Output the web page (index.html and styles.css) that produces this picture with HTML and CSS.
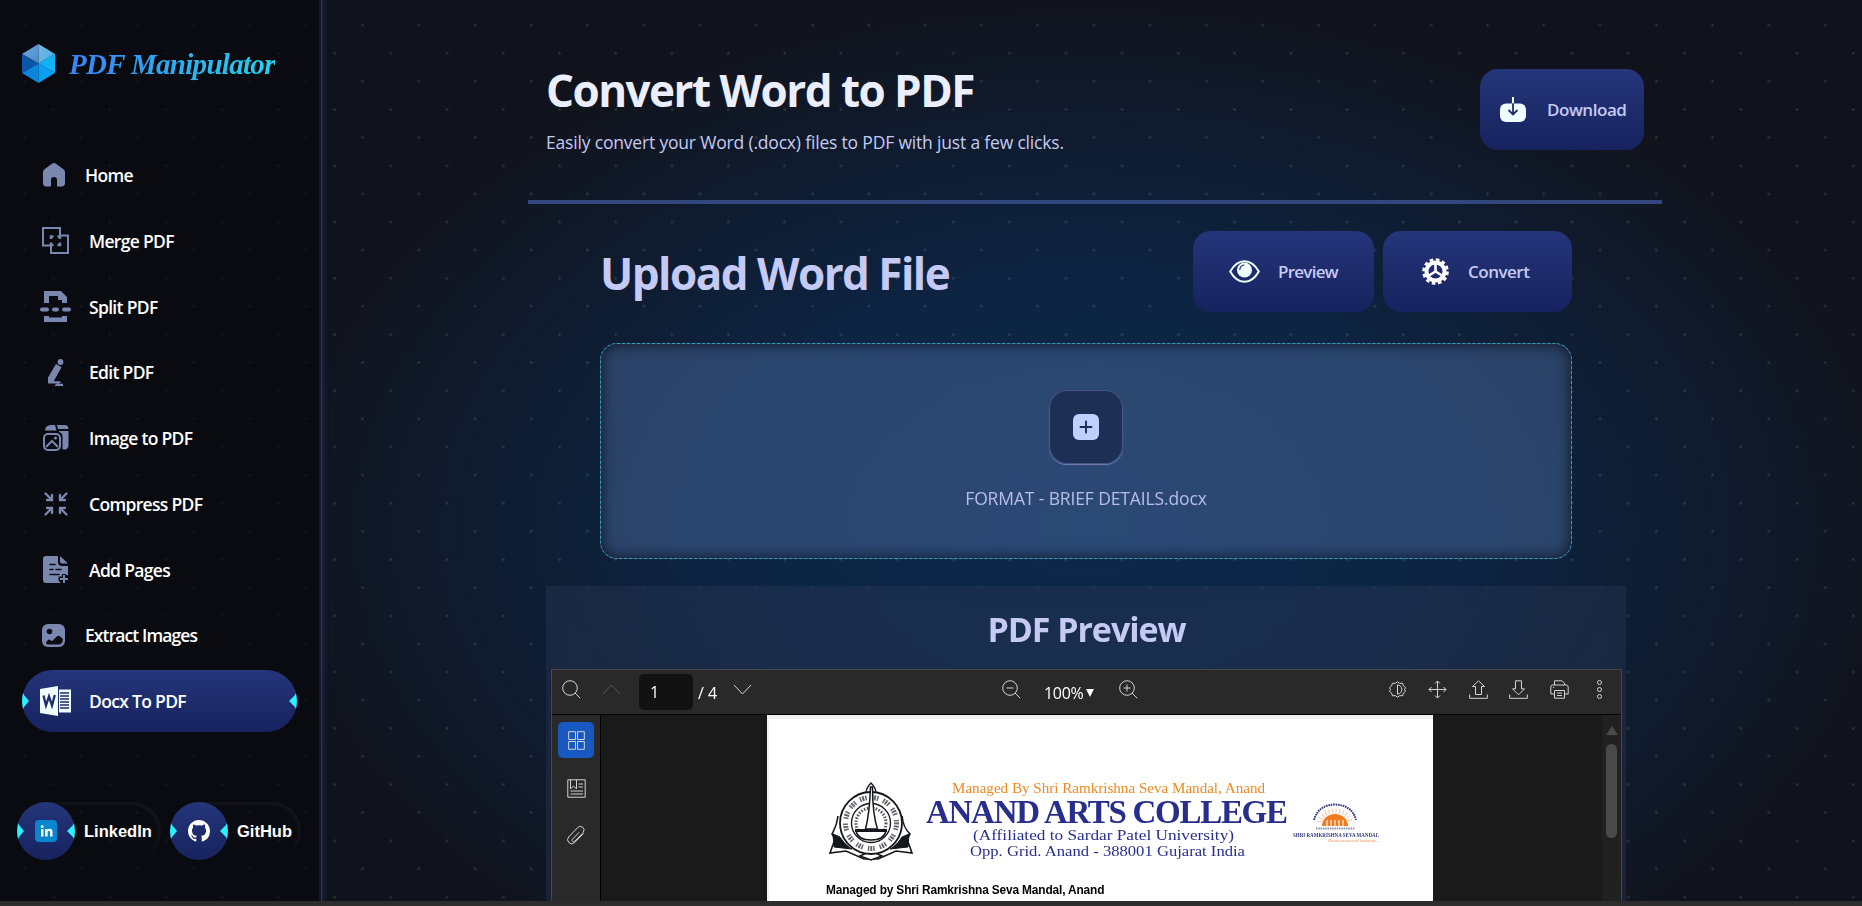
FILE: index.html
```html
<!DOCTYPE html>
<html lang="en">
<head>
<meta charset="utf-8">
<title>PDF Manipulator</title>
<link rel="stylesheet" href="styles.css">
</head>
<body>
<div class="app">
  <aside class="sidebar">
    <div class="brand">
      <svg class="brand-mark" viewBox="0 0 33 39">
        <defs>
          <linearGradient id="h1" x1="0" y1="0" x2="1" y2="1"><stop offset="0" stop-color="#6fa6dd"/><stop offset="1" stop-color="#4b8dd0"/></linearGradient>
          <linearGradient id="h2" x1="0" y1="0" x2="1" y2="1"><stop offset="0" stop-color="#7db4dc"/><stop offset="1" stop-color="#3fb4ee"/></linearGradient>
        </defs>
        <path d="M16.5 0 0 10 16.5 19.5z" fill="url(#h1)"/><path d="M16.5 0 33 10 16.5 19.5z" fill="url(#h2)"/>
        <path d="M0 10v19l16.5-9.500z" fill="#0b56a8"/><path d="M33 10v19l-16.500-9.500z" fill="#12b2f7"/>
        <path d="M0 29 16.500 39V19.500z" fill="#0a86dc"/><path d="M33 29 16.500 39V19.500z" fill="#08a0f2"/>
      </svg>
      <span class="brand-name">PDF Manipulator</span>
    </div>
    <nav class="nav">
      <a class="nav-item narrow"><span class="ico"><svg width="22" height="24" viewBox="0 0 22 24"><path fill="#7a88b0" d="M9 .7a3.500 3.500 0 0 1 4 0l7.500 5.600A3.500 3.500 0 0 1 22 9v11a3.400 3.400 0 0 1-3.400 3.400H14V17a3 3 0 0 0-6 0v6.400H3.400A3.400 3.400 0 0 1 0 20V9a3.500 3.500 0 0 1 1.500-2.700z"/></svg></span><span>Home</span></a>
      <a class="nav-item"><span class="ico"><svg width="27" height="27" viewBox="0 0 27 27" fill="none" stroke="#7a88b0" stroke-width="2"><path d="M1 1h17v7.500h8V26H9v-7.500H1z"/><path d="M9 12V9.500h2.500M15.500 9.500H18V12M9 15.500V18h2.500M18 15.500V18h-2.500" stroke-width="2.400"/></svg></span><span>Merge PDF</span></a>
      <a class="nav-item"><span class="ico"><svg width="31" height="31" viewBox="0 0 31 31" fill="#7a88b0"><path d="M4 12V0h17l6 6v6h-5V9h-4V5H9v7zM4 25h5v1.500h13V25h5v6H4z"/><rect y="16.500" width="9" height="4" rx="2"/><rect x="12" y="16.500" width="7" height="4" rx="2"/><rect x="22" y="16.500" width="9" height="4" rx="2"/></svg></span><span>Split PDF</span></a>
      <a class="nav-item"><span class="ico"><svg width="17" height="27" viewBox="0 0 17 27" fill="#7a88b0"><circle cx="13.500" cy="3" r="2.900"/><path d="m9 5 5.500 3.200-7.800 14H13l1 1.200-3 1.300h5V27H8v-1.200l2.500-1.300H1v-6z"/></svg></span><span>Edit PDF</span></a>
      <a class="nav-item"><span class="ico"><svg width="26" height="26" viewBox="0 0 26 26" fill="#7a88b0"><path d="M2 5.500A5.500 5.500 0 0 1 7.500 0H12l1.500 5.500zM14 0h7.500A4 4 0 0 1 25.500 4H15zM16 6h9.500v14a4 4 0 0 1-6 4V12a5 5 0 0 0-3.500-5z"/><rect x="1" y="9" width="16" height="16" rx="4" fill="none" stroke="#7a88b0" stroke-width="2"/><path d="m3 22 6-6 6 6" fill="none" stroke="#7a88b0" stroke-width="2"/><circle cx="12.500" cy="13" r="1.600"/></svg></span><span>Image to PDF</span></a>
      <a class="nav-item"><span class="ico"><svg width="24" height="24" viewBox="0 0 24 24" fill="none" stroke="#7a88b0" stroke-width="2.300" stroke-linecap="round"><path d="m1.500 1.500 6 6M8 3v5H3M22.500 1.500l-6 6M16 3v5h5M1.500 22.500l6-6M8 21v-5H3M22.500 22.500l-6-6M16 21v-5h5"/></svg></span><span>Compress PDF</span></a>
      <a class="nav-item"><span class="ico"><svg width="25" height="27" viewBox="0 0 25 27"><path fill="#7a88b0" d="M3 0h12v6a4 4 0 0 0 4 4h6v9.500l-3-1.500h-3v2.500h-3.500v4L18 27H3a3 3 0 0 1-3-3V3a3 3 0 0 1 3-3zM17 0l8 7.500h-6a2 2 0 0 1-2-2z"/><path d="M7 8.500h5M7 13.500h3M13 13.500h5M7 18.500h9" stroke="#0a0c12" stroke-width="1.600" stroke-linecap="round"/><path d="M21 19v8M17 23h8" stroke="#7a88b0" stroke-width="2"/></svg></span><span>Add Pages</span></a>
      <a class="nav-item narrow"><span class="ico"><svg width="23" height="23" viewBox="0 0 23 23"><rect width="23" height="23" rx="6" fill="#7a88b0"/><circle cx="7.500" cy="7.500" r="2.800" fill="#0a0c12"/><path fill="#0a0c12" d="M4 18.500 6 16q1.300-1 2.500.3t2.500 0l3.500-3.500q2-2 4 0l2.500 2.500q-.5 5.200-4.500 5.200H7q-3 0-3-2z"/></svg></span><span class="t-ext">Extract Images</span></a>
      <a class="nav-item active"><span class="ico"><svg width="31" height="30" viewBox="0 0 31 30"><path fill="#f0ffff" d="m0 3 18-3v30L0 27z"/><path fill="#f0ffff" d="M19 3.500h12v23H19z"/><path d="M20 7h9M20 10h9M20 13h9M20 16h9M20 19h9M20 22h9" stroke="#1e2c6a" stroke-width="1.300"/><path d="m3.500 9.500 2.500 10 3-9 3 9 2.800-10.500" fill="none" stroke="#1e2c6a" stroke-width="2.300"/></svg></span><span>Docx To PDF</span></a>
    </nav>
    <div class="social">
      <a class="pill pill-in"><span class="disc"><svg width="22" height="22" viewBox="0 0 22 22"><rect width="22" height="22" rx="4" fill="#0a86d0"/><path fill="#fff" d="M6 9h2.400v7.500H6zM10.200 9h2.300v1q.8-1.200 2.300-1.200 2.700 0 2.700 3.200v4.500h-2.400v-4q0-1.700-1.200-1.700-1.300 0-1.300 1.700v4h-2.400z"/><circle cx="7.200" cy="6.700" r="1.400" fill="#fff"/></svg></span><span>LinkedIn</span></a>
      <a class="pill pill-gh"><span class="disc"><svg width="22" height="22" viewBox="0 0 16 16"><path fill="#fff" d="M8 0C3.580 0 0 3.580 0 8c0 3.540 2.290 6.530 5.470 7.590.4.070.55-.17.55-.38 0-.19-.01-.82-.01-1.490-2.010.37-2.530-.49-2.690-.94-.09-.23-.48-.94-.82-1.130-.28-.15-.68-.52-.01-.53.63-.01 1.080.58 1.230.82.72 1.210 1.870.87 2.330.66.070-.52.28-.87.51-1.070-1.780-.2-3.640-.89-3.640-3.950 0-.87.31-1.590.82-2.150-.08-.2-.36-1.020.08-2.120 0 0 .67-.21 2.200.82.64-.18 1.320-.27 2-.27s1.360.09 2 .27c1.530-1.040 2.200-.82 2.200-.82.44 1.100.16 1.920.08 2.120.51.56.82 1.270.82 2.150 0 3.070-1.870 3.750-3.650 3.950.29.25.54.73.54 1.480 0 1.070-.01 1.930-.01 2.200 0 .21.15.46.55.38A8.010 8.010 0 0 0 16 8c0-4.420-3.580-8-8-8z"/></svg></span><span>GitHub</span></a>
    </div>
  </aside>

  <main class="main">
    <header class="head">
      <div class="head-text">
        <h1>Convert Word to PDF</h1>
        <p>Easily convert your Word (.docx) files to PDF with just a few clicks.</p>
      </div>
      <button class="btn btn-dl"><svg width="26" height="26" viewBox="0 0 26 26"><rect y="6.500" width="26" height="18.500" rx="6" fill="#f0ffff"/><path d="M13 0v7" stroke="#f0ffff" stroke-width="2"/><path d="M13 7v10M9 13.500l4 4 4-4" fill="none" stroke="#1e2c6a" stroke-width="1.800" stroke-linecap="round"/></svg><span>Download</span></button>
    </header>
    <section class="upload">
      <div class="upload-bar">
        <h2>Upload Word File</h2>
        <div class="actions">
          <button class="btn btn-pv"><svg width="31" height="23" viewBox="0 0 31 23"><path d="M1.200 11.500Q7 1.200 15.500 1.200T29.800 11.500Q24 21.800 15.500 21.800T1.200 11.500z" fill="none" stroke="#f0ffff" stroke-width="2"/><circle cx="15.500" cy="10" r="7.500" fill="#f0ffff"/><path d="M10.800 10q0-4.500 4.500-5" fill="none" stroke="#1e2c6a" stroke-width="1.200"/></svg><span>Preview</span></button>
          <button class="btn btn-cv"><svg width="27" height="27" viewBox="0 0 27 27" fill="none" stroke="#fff"><circle cx="13.500" cy="13.500" r="12" stroke-width="2.600" stroke-dasharray="3.600 2.683"/><circle cx="13.500" cy="13.500" r="9" stroke-width="4"/><path d="M13.500 6v7.500M7 17.500l6.500-4 6.500 4" stroke-width="2.600"/></svg><span>Convert</span></button>
        </div>
      </div>
      <div class="drop">
        <div class="plus"><svg width="26" height="26" viewBox="0 0 26 26"><rect width="26" height="26" rx="6" fill="#bfd0ff"/><path d="M13 7.500v11M7.500 13h11" stroke="#1d2c54" stroke-width="1.900" stroke-linecap="round"/></svg></div>
        <span class="file-name">FORMAT - BRIEF DETAILS.docx</span>
      </div>
    </section>
    <section class="preview">
      <h3>PDF Preview</h3>
      <div class="viewer">
        <div class="toolbar">
          <div class="tools tools-left">
            <svg width="19" height="19" viewBox="0 0 19 19"><circle cx="8" cy="8" r="7.300"/><path d="m13 13 5.300 5.300"/></svg>
            <svg class="dim" width="19" height="19" viewBox="0 0 19 19"><path d="m1 14 8.500-9 8.500 9"/></svg>
            <span class="page-no">1</span><span class="page-count">/ 4</span>
            <svg width="19" height="19" viewBox="0 0 19 19"><path d="m1 5 8.500 9L18 5"/></svg>
          </div>
          <div class="tools tools-mid">
            <svg width="19" height="19" viewBox="0 0 19 19"><circle cx="8" cy="8" r="7.300"/><path d="m13 13 5.300 5.300M4.500 8h7"/></svg>
            <span class="zoom">100%<i></i></span>
            <svg width="19" height="19" viewBox="0 0 19 19"><circle cx="8" cy="8" r="7.300"/><path d="m13 13 5.300 5.300M4.500 8h7M8 4.500v7"/></svg>
          </div>
          <div class="tools tools-right">
            <svg width="19" height="19" viewBox="0 0 19 19"><path d="M9.500 1.800 11.800 3.400l2.800-.2.800 2.700 2.100 1.700-1 1.900 1 1.900-2.100 1.700-.8 2.700-2.800-.2-2.300 1.600-2.300-1.600-2.800.2-.8-2.700-2.100-1.700 1-1.900-1-1.900 2.100-1.700.8-2.700 2.800.2z"/><path d="M9.500 4.800v9.400q4.300-.9 4.300-4.700T9.500 4.800z"/></svg>
            <svg width="19" height="19" viewBox="0 0 19 19"><path d="M9.500 1v17M1 9.500h17M7 3.500 9.500 1 12 3.500M7 15.500 9.500 18l2.500-2.500M3.500 7 1 9.500 3.500 12M15.500 7 18 9.500 15.500 12"/></svg>
            <svg width="19" height="19" viewBox="0 0 19 19"><path d="M.7 14.500v3.800h17.600v-3.800M9.500.8l6 5.700h-3v8h-6v-8h-3z"/></svg>
            <svg width="19" height="19" viewBox="0 0 19 19"><path d="M.7 14.500v3.800h17.600v-3.800M9.500 14.800l-6-6h3v-8h6v8h3z"/></svg>
            <svg width="19" height="19" viewBox="0 0 19 19"><path d="M4.500 5V.8h7.500l2.500 2.500V5M4.500 14H.8V7q0-2 2-2h13.400q2 0 2 2v7h-3.700M4.500 10.500h10v7.700h-10zM7 13h5M7 15.500h5M3 7.500h1"/></svg>
            <svg width="19" height="19" viewBox="0 0 19 19"><circle cx="9.500" cy="2.500" r="2"/><circle cx="9.500" cy="9.500" r="2"/><circle cx="9.500" cy="16.500" r="2"/></svg>
          </div>
        </div>
        <div class="stage">
          <div class="rail">
            <span class="rail-on"><svg width="17" height="19" viewBox="0 0 17 19"><path d="M.7.700h6.800v7.800H.7zM9.500.7h6.800v7.800H9.500zM.7 10.500h6.800v7.800H.7zM9.500 10.500h6.800v7.800H9.500z"/></svg></span>
            <svg width="19" height="19" viewBox="0 0 19 19"><path d="M.8.800h17.400v17.400H.8zM3.500.8v9l3-2.500 3 2.500v-9M11.500 5H16M11.500 8H16M3.500 12H16M3.500 15H16"/></svg>
            <svg width="19" height="19" viewBox="0 0 19 19"><path d="m16.500 7.500-8.800 9a4 4 0 0 1-5.900-5.700l8.700-9a3.300 3.300 0 0 1 5.700 4.500l-.7 1-7.800 8a1.500 1.500 0 0 1-2.300-2l6.700-7"/></svg>
          </div>
          <div class="canvas">
            <div class="page">
              <svg class="letterhead" width="560" height="90" viewBox="824 775 560 90">
                <g fill="none" stroke="#15151c">
                  <path d="M838 816c-1 10-4 14-6 18l3 5-5 14 16-2 18 8h14l18-8 16 2-5-14 3-5c-4-4-7-8-8-18" fill="#fff" stroke-width="1.600"/>
                  <path d="m833 834 7 3c4 6 7 9 12 12l-18-2zM909 834l-7 3c-4 6-7 9-12 12l18-2z" fill="#15151c"/>
                  <path d="m860 856 11-5 11 5-11 4z" fill="#fff" stroke-width="1.500"/>
                  <path d="M871 783q-5 5-5 10h10q0-5-5-10z" stroke-width="1.300"/>
                  <circle cx="871" cy="823" r="31" fill="#fff" stroke-width="1.800"/>
                  <circle cx="871" cy="823" r="25.500" stroke="#66666e" stroke-width="5" stroke-dasharray="1.500 1 2 1 1.500 5"/>
                  <circle cx="871" cy="823" r="19.500" stroke-width="1.300"/>
                  <circle cx="871" cy="823" r="15" stroke="#55555c" stroke-width="3" stroke-dasharray="1.500 1.500"/>
                  <path d="M870.500 787q-1 27-5 42h12q-5-15-5-42z" fill="#fff" stroke-width="1.500"/>
                  <path d="M856 831h30q-2 9-15 9t-15-9z" fill="#fff" stroke-width="1.300"/><path d="M855 830.500h32" stroke-width="3"/>
                </g>
                <g font-family="Liberation Serif, serif">
                  <text x="952" y="793" font-size="15.500" fill="#ee8a22" textLength="313" lengthAdjust="spacingAndGlyphs">Managed By Shri Ramkrishna Seva Mandal, Anand</text>
                  <text x="926" y="822.500" font-size="33" font-weight="bold" fill="#272e8c" textLength="362">ANAND ARTS COLLEGE</text>
                  <text x="973" y="840" font-size="15.500" fill="#272e8c" textLength="261" lengthAdjust="spacingAndGlyphs">(Affiliated to Sardar Patel University)</text>
                  <text x="970" y="856" font-size="15.500" fill="#272e8c" textLength="275" lengthAdjust="spacingAndGlyphs">Opp. Grid. Anand - 388001 Gujarat India</text>
                </g>
                <path d="M1314 820q4-15 21-15.500 17 .5 21 15.500" fill="none" stroke="#33397f" stroke-width="2" stroke-dasharray="1.600 .8"/>
                <path d="M1320 822a15 11 0 0 1 30 0" fill="none" stroke="#f7c7a4" stroke-width="5" stroke-dasharray="1 2.500"/>
                <path d="M1322 826a13 12 0 0 1 26 0z" fill="#f47a20"/><path d="M1327 826v-6M1331 826v-6M1335 826v-6M1339 826v-6M1343 826v-6" stroke="#ffe0c0" stroke-width="1.500"/>
                <path d="M1316 828.500h39" stroke="#8d8fa8" stroke-width="2" stroke-dasharray="1.500 .8"/>
                <text x="1293" y="837" font-family="Liberation Serif, serif" font-weight="bold" font-size="5.500" fill="#33397f" textLength="86" lengthAdjust="spacingAndGlyphs">SHRI RAMKRISHNA SEVA MANDAL</text>
                <text x="1328" y="842" font-family="Liberation Serif, serif" font-style="italic" font-size="5" fill="#f0905a" textLength="51" lengthAdjust="spacingAndGlyphs">Devotion towards humanity...</text>
              </svg>
              <p class="doc-line">Managed by Shri Ramkrishna Seva Mandal, Anand</p>
            </div>
          </div>
          <div class="scroll"><i class="arrow"></i><i class="thumb"></i></div>
        </div>
      </div>
    </section>
  </main>
</div>
<div class="strip"></div>
</body>
</html>
```

FILE: styles.css
```css
* { box-sizing: border-box; margin: 0; padding: 0; }
body {
  height: 906px; overflow: hidden; display: flex; flex-direction: column;
  font-family: "Open Sans", "Noto Sans", sans-serif; background: #11131d;
}
.app {
  flex: 1; min-height: 0; display: flex; overflow: hidden;
  background:
    radial-gradient(circle, rgba(200,205,200,.17) 0 .7px, transparent 1.9px) -3.1px -3.1px / 56.25px 56.25px,
    radial-gradient(circle, rgba(200,205,200,.17) 0 .7px, transparent 1.9px) 25.2px 25.2px / 56.25px 56.25px,
    radial-gradient(ellipse 830px 540px at 1086px 530px, #0c284a 0%, #0d2443 45%, #0f1c30 72%, #11131c 100%);
}
.strip { height: 5px; background: #2d2d2e; }

.sidebar {
  width: 322px; padding: 44px 22px 0; display: flex; flex-direction: column;
  background: rgba(5,6,8,.58); border-right: 1px solid #303659;
  box-shadow: inset -2px 0 0 #0e1838, 3px 0 4px rgba(48,54,89,.35);
}
.brand { display: flex; gap: 14px; height: 39px; align-items: center; margin-bottom: 61px; }
.brand-mark { width: 33px; height: 39px; }
.brand-name {
  font: italic bold 29px/36px "Liberation Serif", serif; letter-spacing: -.7px; white-space: nowrap;
  background: linear-gradient(90deg, #3b82f6, #22d3ee); -webkit-background-clip: text; color: transparent;
}
.nav { display: flex; flex-direction: column; gap: 3.75px; width: 275px; }
.nav-item {
  height: 62px; padding-left: 18px; display: flex; align-items: center; gap: 18px;
  color: #fff; font-weight: 600; font-size: 17.500px; letter-spacing: -.68px; white-space: nowrap; border-radius: 31px;
}
.nav-item .t-ext { letter-spacing: -.9px; }
.ico { width: 31px; display: flex; justify-content: center; }
.narrow .ico { width: 27px; }
.active, .disc { position: relative; overflow: hidden; background: linear-gradient(#25357a, #17235f); }
.active::before, .active::after, .disc::before, .disc::after {
  content: ""; position: absolute; top: 50%; width: 7px; height: 22px; margin-top: -11px; background: #2af0ff;
}
.active::before, .disc::before { left: 0; clip-path: polygon(0 0, 2px 5px, 100% 50%, 2px 17px, 0 100%); }
.active::after, .disc::after { right: 0; width: 8px; clip-path: polygon(100% 0, 6px 5px, 0 50%, 6px 17px, 100% 100%); }
.social { display: flex; gap: 9px; margin: 70px 0 0 -5px; width: 284px; }
.pill {
  height: 58px; border-radius: 29px; display: flex; align-items: center; gap: 9px; color: #fff;
  font: bold 16.500px "Liberation Sans", Arial, sans-serif; box-shadow: inset -2px 2px 5px rgba(255,255,255,.06);
}
.pill-in { width: 144px; }
.pill-gh { width: 131px; }
.disc { flex: none; width: 58px; height: 58px; border-radius: 50%; display: flex; align-items: center; justify-content: center; }

.main { width: 1134px; margin-left: 206px; flex: none; }
.head {
  height: 204px; border-bottom: 4px solid #32477e; padding: 64px 18px 0; display: flex; justify-content: space-between;
}
.head-text { white-space: nowrap; }
h1, h2 { font-size: 44px; line-height: 52px; font-weight: 700; letter-spacing: -1.530px; white-space: nowrap; }
h1 { color: #ebeeff; }
.head p { margin-top: 14px; font-size: 17.500px; line-height: 24px; color: #c5caf2; letter-spacing: -.18px; }
.btn {
  height: 81px; border: 0; border-radius: 18px; display: flex; align-items: center; background: linear-gradient(#25357a, #17235f);
  color: #c5caf5; font: 600 17px "Open Sans", sans-serif; letter-spacing: -.6px; white-space: nowrap;
}
.btn-dl { width: 164px; margin-top: 5px; padding-left: 20px; gap: 21px; letter-spacing: -.45px; }
.btn-pv { width: 181px; padding-left: 36px; gap: 18px; letter-spacing: -.75px; }
.btn-cv { width: 189px; padding-left: 39px; gap: 19px; letter-spacing: -.5px; }
.upload { width: 972px; margin: 27px 0 0 72px; }
.upload-bar { height: 81px; display: flex; justify-content: space-between; }
h2 { color: #c5caf5; margin-top: 16px; }
.actions { display: flex; gap: 9px; }
.drop {
  margin-top: 31px; height: 216px; border: 1px dashed #2fa3b0; border-radius: 17px; padding-top: 46px;
  display: flex; flex-direction: column; align-items: center; background: rgba(97,133,190,.36);
  backdrop-filter: blur(10px); box-shadow: inset 0 0 14px rgba(10,14,30,.9); color: #b9bde8; font-size: 17.500px;
}
.plus {
  width: 74px; height: 74px; border-radius: 18px; background: #1e2f56; display: flex; align-items: center; justify-content: center;
  box-shadow: inset 0 0 0 1px #465885, 0 1px 1px #757db2; margin-bottom: 22px;
}
.file-name { line-height: 24px; letter-spacing: -.13px; }
.preview { width: 1080px; margin: 27px 0 0 18px; height: 330px; padding: 0 4px 0 5px; background: rgba(48,58,90,.36); backdrop-filter: blur(8px); }
h3 { height: 83px; padding-top: 21px; text-align: center; font-size: 34px; line-height: 44px; color: #c5caf5; letter-spacing: -1.050px; }
.viewer { height: 260px; border: 1px solid #48484a; background: #1a1a1a; }
.toolbar { height: 45px; background: #292929; border-bottom: 1px solid #000; display: flex; align-items: center; padding: 0 12px 4px 10px; }
.tools { display: flex; align-items: center; color: #fff; font-size: 16px; }
.tools svg { position: relative; top: -1px; }
.tools svg, .rail svg { fill: none; stroke: #d4d4d4; stroke-width: 1; flex: none; }
.tools .dim { stroke: #555; margin-left: 21px; }
.page-no { width: 54px; height: 36px; margin: 4px 5px 0 18px; border-radius: 5px; background: #121212; padding-left: 11px; line-height: 36px; }
.page-count { width: 21px; margin: 5px 14px 0 0; white-space: nowrap; }
.tools-mid { margin-left: 250px; }
.zoom { width: 55px; margin: 6px 20px 0 23px; display: flex; align-items: center; gap: 3px; letter-spacing: -.3px; }
.zoom i { border: 4.500px solid transparent; border-top: 8px solid #fff; border-bottom: 0; }
.tools-right { margin-left: auto; gap: 21.500px; }
.stage { display: flex; height: 220px; }
.rail { width: 49px; background: #292929; border-right: 1px solid #000; padding-top: 7px; display: flex; flex-direction: column; align-items: center; gap: 28px; }
.rail-on { width: 36px; height: 36px; margin-bottom: -7px; border-radius: 5px; background: #1759c0; display: flex; align-items: center; justify-content: center; }
.canvas { flex: 1; padding-left: 166px; }
.page { width: 666px; height: 220px; background: #fff; box-shadow: inset 3px 5px 1px -1px #f1f1f1; padding: 60px 0 0 57px; }
.letterhead { display: block; overflow: visible; }
.doc-line { margin: 18px 0 0 2px; font: bold 11.900px/15px "Liberation Sans", Arial, sans-serif; letter-spacing: -.15px; color: #000; }
.scroll { width: 19px; background: #212121; display: flex; flex-direction: column; align-items: center; padding-top: 11px; gap: 9px; }
.arrow { border: 6px solid transparent; border-bottom: 9px solid #4a4a4a; border-top: 0; }
.thumb { width: 11px; height: 94px; border-radius: 6px; background: #4a4a4a; }
```
